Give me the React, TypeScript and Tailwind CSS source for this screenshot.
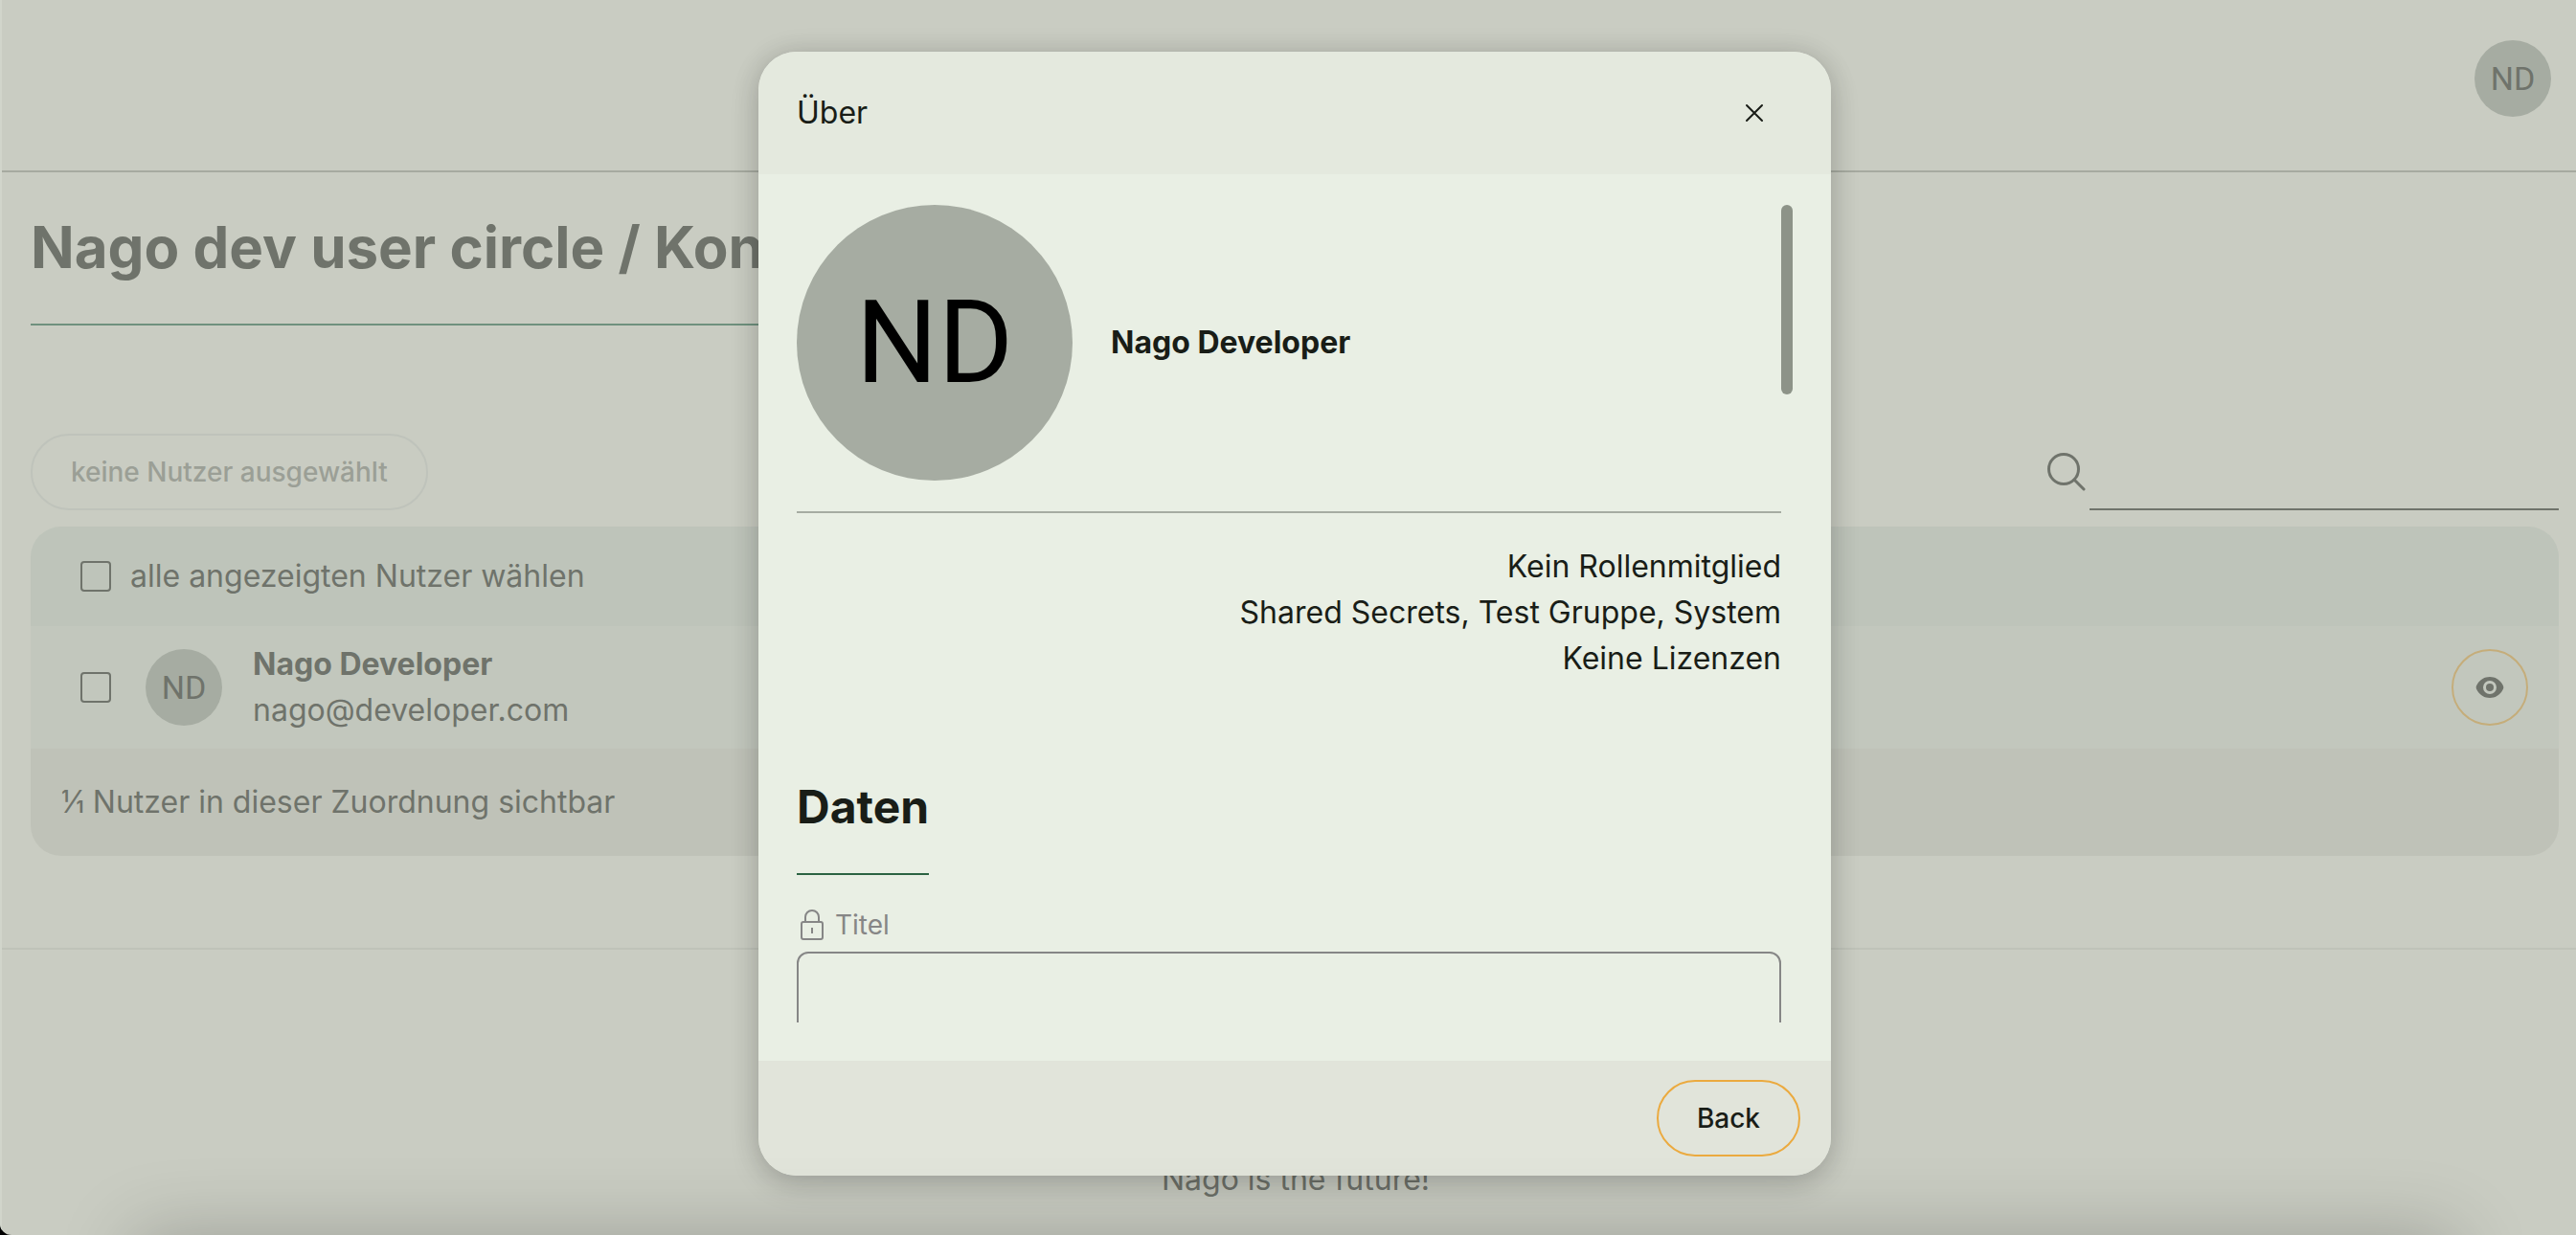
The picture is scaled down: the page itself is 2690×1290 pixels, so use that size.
import type { ReactNode } from "react";

function Avatar({ className }: { className: string }) {
  return (
    <div
      className={`flex shrink-0 items-center justify-center rounded-full bg-[#a6aca2] font-['Roboto',sans-serif] ${className}`}
    >
      ND
    </div>
  );
}

function SearchIcon() {
  return (
    <svg viewBox="0 0 48 48" className="size-12" fill="none" stroke="currentColor" strokeWidth="3" strokeLinecap="round">
      <circle cx="21" cy="21" r="15.5" />
      <path d="M32 32l10 10" />
    </svg>
  );
}

function EyeIcon() {
  return (
    <svg viewBox="0 0 32 32" className="size-8">
      <path
        fill="currentColor"
        fillRule="evenodd"
        d="M16 5C10.500 5 6 7.800 3.300 12C2.200 13.700 1.700 14.800 1.700 16C1.700 17.200 2.200 18.300 3.300 20C6 24.200 10.500 27 16 27C21.500 27 26 24.200 28.700 20C29.800 18.300 30.300 17.200 30.300 16C30.300 14.800 29.800 13.700 28.700 12C26 7.800 21.500 5 16 5ZM16 9a7 7 0 1 1 0 14a7 7 0 0 1 0-14Z"
      />
      <circle cx="16" cy="16" r="4" fill="currentColor" />
    </svg>
  );
}

function LockIcon() {
  return (
    <svg viewBox="0 0 32 32" className="size-8" fill="none" stroke="currentColor" strokeWidth="2">
      <rect x="5" y="13" width="22" height="18" rx="2" />
      <path d="M9 13V8a7 7 0 0 1 14 0v5M16 19v6" />
    </svg>
  );
}

function CloseIcon() {
  return (
    <svg viewBox="0 0 20 20" className="size-5" fill="none" stroke="currentColor" strokeWidth="2" strokeLinecap="round">
      <path d="M2 2l16 16M18 2L2 18" />
    </svg>
  );
}

function Checkbox({ id }: { id: string }) {
  return <input id={id} type="checkbox" className="size-8 shrink-0 appearance-none rounded border-2 border-current" />;
}

function Page({ children }: { children: ReactNode }) {
  return (
    <div className="flex min-h-screen flex-col border-l-2 border-[#d1d5cb] bg-[#c9ccc2] text-[32px] leading-[48px] text-[#6f736b]">
      {children}
    </div>
  );
}

export default function App() {
  return (
    <div className="relative h-screen overflow-hidden bg-black font-['Inter',sans-serif]">
      <div className="relative h-full w-[calc(100%+14px)] overflow-hidden rounded-bl-[12px]">
        <Page>
          <header className="flex h-[180px] shrink-0 items-start justify-end border-b-2 border-[#a6aaa0] px-10 pt-[42px]">
            <Avatar className="size-20 text-[34px]" />
          </header>
          <main className="flex flex-col pr-8 pl-[30px]">
            <h1 className="self-start border-b-2 border-[#6f917e] pt-[34px] pb-9 text-[60px] leading-[88px] font-bold">
              Nago dev user circle / Konten
            </h1>
            <div className="mt-[113px] mb-[17px] flex items-end justify-between">
              <button
                disabled
                className="h-20 rounded-full border-2 border-[#bfc3bb] px-10 text-[28px] font-medium text-[#9b9f96]"
              >
                keine Nutzer ausgewählt
              </button>
              <div className="flex items-center">
                <SearchIcon />
                <input
                  type="search"
                  aria-label="Suche"
                  className="h-20 w-[490px] appearance-none border-b-2 border-[#6f736b] bg-transparent outline-none"
                />
              </div>
            </div>
            <section className="overflow-hidden rounded-[32px]">
              <div className="flex h-[104px] items-center gap-5 bg-[#bec4ba] px-[52px]">
                <Checkbox id="all" />
                <label htmlFor="all">alle angezeigten Nutzer wählen</label>
              </div>
              <div className="flex h-32 items-center bg-[#c2c7bd] pr-8 pl-[52px]">
                <Checkbox id="nd" />
                <Avatar className="mr-8 ml-9 size-20 text-[34px]" />
                <label htmlFor="nd" className="flex-1">
                  <span className="block font-bold">Nago Developer</span>
                  <span className="block">nago@developer.com</span>
                </label>
                <button
                  aria-label="Anzeigen"
                  className="flex size-20 items-center justify-center rounded-full border-2 border-[#c5ad7a]"
                >
                  <EyeIcon />
                </button>
              </div>
              <div className="flex h-28 items-center bg-[#bfc2b8] px-8">1⁄1 Nutzer in dieser Zuordnung sichtbar</div>
            </section>
          </main>
          <footer className="mt-24 flex flex-1 justify-center border-t-2 border-[#bfc3b9] pt-[216px]">
            Nago is the future!
          </footer>
        </Page>

        <div className="absolute inset-0 flex items-start justify-center pt-[54px]">
          <div
            role="dialog"
            aria-labelledby="dialog-title"
            className="flex max-h-[calc(100%-8px)] w-full max-w-[1120px] flex-col overflow-hidden rounded-[40px] bg-[#e9efe4] text-[32px] leading-[48px] text-[#191d17] shadow-[0_0_28px_rgba(0,0,0,0.12),0_10px_32px_rgba(0,0,0,0.14)]"
          >
            <div className="flex h-32 shrink-0 items-center justify-between bg-[#e4e9de] px-10">
              <h2 id="dialog-title">Über</h2>
              <button aria-label="Schließen" className="flex size-14 items-center justify-center mr-3">
                <CloseIcon />
              </button>
            </div>
            <div className="flex h-[926px] px-10 pt-8 pb-10">
              <div className="min-w-0 flex-1 overflow-hidden">
                <div className="flex items-center gap-10 border-b-2 border-[#a6aca2] pb-8">
                  <Avatar className="size-72 text-[120px] leading-none text-black" />
                  <p className="font-bold">Nago Developer</p>
                </div>
                <div className="pt-8 text-right">
                  <p>Kein Rollenmitglied</p>
                  <p>Shared Secrets, Test Gruppe, System</p>
                  <p>Keine Lizenzen</p>
                </div>
                <h3 className="mt-24 w-fit border-b-2 border-[#2b6342] pb-[34px] text-[48px] leading-[70px] font-bold">
                  Daten
                </h3>
                <label htmlFor="titel" className="mt-8 flex items-center gap-2 text-[28px] leading-10 text-[#868686]">
                  <LockIcon />
                  Titel
                </label>
                <input
                  id="titel"
                  disabled
                  className="mt-2 block h-24 w-full rounded-xl border-2 border-[#868686] bg-transparent px-6"
                />
              </div>
              <div className="w-3 shrink-0">
                <div className="h-[198px] rounded-full bg-[#8d9388]" />
              </div>
            </div>
            <div className="flex h-[120px] shrink-0 items-center justify-end bg-[#e1e4da] px-8">
              <button className="h-20 rounded-full border-2 border-[#ebaa3f] px-10 text-[28px] font-medium">Back</button>
            </div>
          </div>
        </div>
        <div className="pointer-events-none absolute inset-x-[140px] -bottom-40 h-40 shadow-[0_0_80px_rgba(0,0,0,0.22)]" />
      </div>
    </div>
  );
}
